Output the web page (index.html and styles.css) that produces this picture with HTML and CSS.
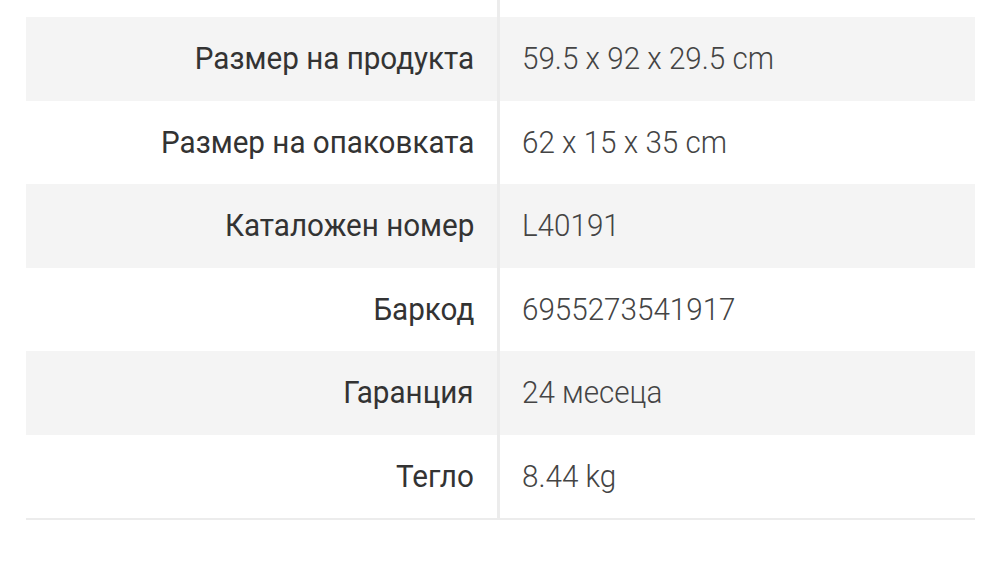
FILE: index.html
```html
<!DOCTYPE html>
<html lang="bg">
<head>
<meta charset="utf-8">
<link rel="stylesheet" href="styles.css">
</head>
<body>
<div class="wrap">
  <table class="specs">
    <tr class="spacer"><td class="k"></td><td class="v"></td></tr>
    <tr class="odd"><td class="k"><span class="t">Размер на продукта</span></td><td class="v"><span class="t">59.5 x 92 x 29.5 cm</span></td></tr>
    <tr><td class="k"><span class="t">Размер на опаковката</span></td><td class="v"><span class="t">62 x 15 x 35 cm</span></td></tr>
    <tr class="odd"><td class="k"><span class="t">Каталожен номер</span></td><td class="v"><span class="t">L40191</span></td></tr>
    <tr><td class="k"><span class="t">Баркод</span></td><td class="v"><span class="t">6955273541917</span></td></tr>
    <tr class="odd"><td class="k"><span class="t">Гаранция</span></td><td class="v"><span class="t">24 месеца</span></td></tr>
    <tr class="last"><td class="k"><span class="t">Тегло</span></td><td class="v"><span class="t">8.44 kg</span></td></tr>
  </table>
</div>
</body>
</html>
```
FILE: styles.css
```css
html, body {
  margin: 0;
  padding: 0;
  background: #ffffff;
}
.wrap {
  padding: 0 25px 0 26px;
}
.specs {
  width: 949px;
  border-collapse: collapse;
  font-family: Roboto, "Noto Sans", sans-serif;
  font-size: 31.5px;
}
.specs td {
  height: 83.5px;
  padding: 0;
  vertical-align: middle;
  white-space: nowrap;
}
.specs .spacer td {
  height: 17px;
}
.specs .odd td {
  background: #f4f4f4;
}
.specs .t {
  display: inline-block;
  transform: scaleX(0.94);
}
.specs .k {
  width: 448px;
  padding-right: 23px;
  text-align: right;
  color: #333333;
  font-weight: 400;
}
.specs .k .t {
  transform-origin: right center;
}
.specs .v {
  border-left: 3px solid #ececec;
  padding-left: 22px;
  color: #444444;
  font-weight: 300;
}
.specs .v .t {
  transform-origin: left center;
}
.specs .last td {
  border-bottom: 2px solid #ececec;
}
```
